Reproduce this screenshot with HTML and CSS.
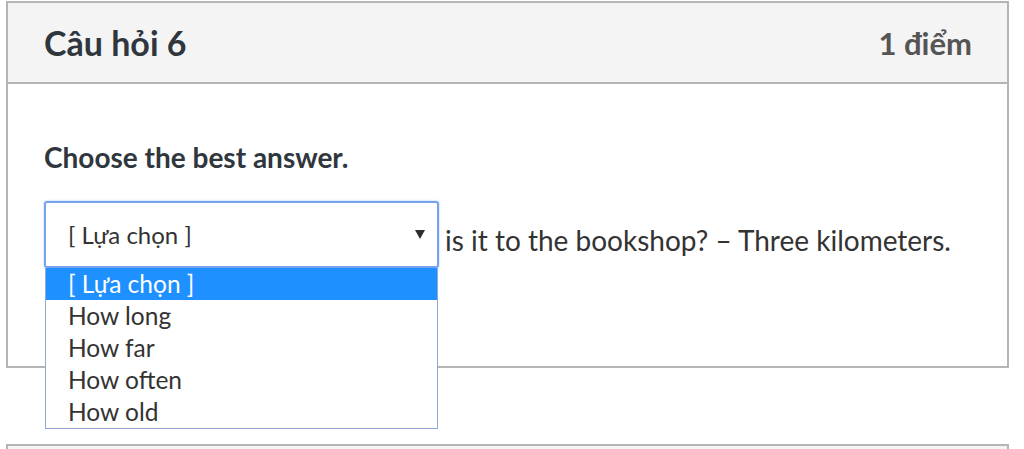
FILE: index.html
```html
<!DOCTYPE html>
<html lang="vi">
<head>
    <meta charset="UTF-8">
    <meta name="viewport" content="width=device-width, initial-scale=1.0">
    <title>Câu hỏi 6</title>
    <link rel="stylesheet" href="styles.css">
</head>
<body>
    <div class="card">
        <div class="card-header">
            <h2>Câu hỏi 6</h2>
            <span class="points">1 điểm</span>
        </div>

        <div class="card-body">
            <p class="prompt">Choose the best answer.</p>

            <div class="question">
                <!-- Open dropdown -->
                <div class="select-wrap">
                    <div class="select">
                        <span>[ Lựa chọn ]</span>
                        <svg class="arrow" width="10" height="9" viewBox="0 0 10 9">
                            <path d="M0 0 H10 L5 9 Z" fill="#2b2f33"/>
                        </svg>
                    </div>
                    <ul class="options">
                        <li class="selected">[ Lựa chọn ]</li>
                        <li>How long</li>
                        <li>How far</li>
                        <li>How often</li>
                        <li>How old</li>
                    </ul>
                </div>
                <span class="rest">is it to the bookshop? – Three kilometers.</span>
            </div>
        </div>
    </div>

    <div class="card card-next"></div>
</body>
</html>
```

FILE: styles.css
```css
* {
    box-sizing: border-box;
    margin: 0;
    padding: 0;
}

body {
    font-family: Lato, "Noto Sans", sans-serif;
    background: #fff;
    color: #333;
    padding: 1px 15px 0 6px;
}

.card {
    border: 2px solid #b5b5b5;
    background-color: #fff;
}

.card-header {
    display: flex;
    justify-content: space-between;
    align-items: center;
    height: 81px;
    padding: 0 35px 0 36px;
    background-color: #f4f4f4;
    border-bottom: 2px solid #b5b5b5;
}

.card-header h2 {
    font-size: 34px;
    font-weight: 700;
    color: #2f363d;
}

.points {
    font-size: 31px;
    font-weight: 700;
    color: #555;
}

.card-body {
    height: 282px;
    padding: 56px 36px 0;
}

.prompt {
    font-size: 28px;
    font-weight: 700;
    line-height: 34px;
    color: #2f363d;
    margin-bottom: 27px;
}

.question {
    display: flex;
    align-items: center;
    font-size: 28px;
}

.select-wrap {
    position: relative;
    width: 395px;
    flex-shrink: 0;
}

.select {
    display: flex;
    justify-content: space-between;
    align-items: center;
    height: 67px;
    padding: 0 12px 0 22px;
    border: 2px solid #77a3ee;
    border-radius: 3px;
    box-shadow: 0 0 2px rgba(80, 140, 240, 0.6);
    font-size: 24px;
    color: #333;
}

.options {
    position: absolute;
    top: 100%;
    left: 1px;
    right: 1px;
    list-style: none;
    background-color: #fff;
    border: 1px solid #8fa8d6;
    border-top: none;
}

.options li {
    height: 32px;
    line-height: 32px;
    padding-left: 22px;
    font-size: 24.5px;
    color: #333;
}

.options li.selected {
    background-color: #1e90ff;
    color: #fff;
}

.rest {
    margin-left: 6px;
    padding-top: 10px;
    white-space: nowrap;
    color: #333;
}

.card-next {
    margin-top: 76px;
    height: 20px;
    background-color: #f4f4f4;
}
```
